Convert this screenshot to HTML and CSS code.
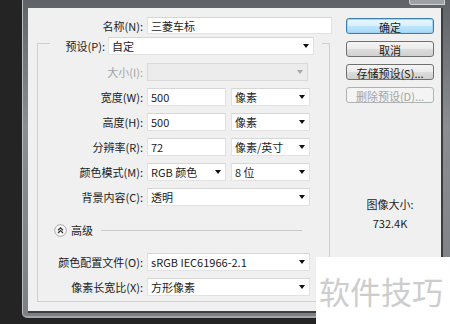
FILE: index.html
```html
<!DOCTYPE html>
<html lang="zh-CN">
<head>
  <meta charset="UTF-8">
  <title>新建</title>
  <link rel="stylesheet" href="styles.css">
</head>
<body>
  <!-- 新建文档对话框 -->
  <div class="window">
    <div class="titlebar"><span class="close-stub"></span></div>
    <div class="dialog">
      <div class="main">
        <div class="row name-row">
          <span class="lbl">名称(N):</span>
          <div class="field name">三菱车标</div>
        </div>

        <fieldset class="group">
          <legend class="group-head">
            <span class="lbl">预设(P):</span>
            <div class="field select preset"><span>自定</span><i class="arrow"></i></div>
          </legend>

          <div class="row off">
            <span class="lbl">大小(I):</span>
            <div class="field select full"><span></span><i class="arrow"></i></div>
          </div>
          <div class="row">
            <span class="lbl">宽度(W):</span>
            <div class="field half">500</div>
            <div class="field select half"><span>像素</span><i class="arrow"></i></div>
          </div>
          <div class="row">
            <span class="lbl">高度(H):</span>
            <div class="field half">500</div>
            <div class="field select half"><span>像素</span><i class="arrow"></i></div>
          </div>
          <div class="row">
            <span class="lbl">分辨率(R):</span>
            <div class="field half">72</div>
            <div class="field select half"><span>像素/英寸</span><i class="arrow"></i></div>
          </div>
          <div class="row">
            <span class="lbl">颜色模式(M):</span>
            <div class="field select half"><span>RGB 颜色</span><i class="arrow"></i></div>
            <div class="field select half"><span>8 位</span><i class="arrow"></i></div>
          </div>
          <div class="row">
            <span class="lbl">背景内容(C):</span>
            <div class="field select full"><span>透明</span><i class="arrow"></i></div>
          </div>

          <div class="advanced">
            <svg class="chev" width="13" height="13" viewBox="0 0 13 13">
              <circle cx="6.5" cy="6.5" r="5.8" fill="#f7f7f7" stroke="#a8a8a8"/>
              <path d="M4 6.2 6.5 3.8 9 6.2M4 9 6.5 6.6 9 9" fill="none" stroke="#333" stroke-width="1.2"/>
            </svg>
            <span>高级</span>
            <i class="rule"></i>
          </div>

          <div class="row">
            <span class="lbl">颜色配置文件(O):</span>
            <div class="field select full"><span>sRGB IEC61966-2.1</span><i class="arrow"></i></div>
          </div>
          <div class="row">
            <span class="lbl">像素长宽比(X):</span>
            <div class="field select full"><span>方形像素</span><i class="arrow"></i></div>
          </div>
        </fieldset>
      </div>

      <div class="side">
        <button class="btn primary">确定</button>
        <button class="btn">取消</button>
        <button class="btn">存储预设(S)...</button>
        <button class="btn" disabled>删除预设(D)...</button>
        <div class="size-info">
          <p>图像大小:</p>
          <p>732.4K</p>
        </div>
      </div>
    </div>
  </div>

  <div class="watermark">软件技巧</div>
</body>
</html>
```

FILE: styles.css
```css
* {box-sizing:border-box;margin:0;padding:0;}
body {background:#242424;font-family:"Noto Sans CJK SC","Microsoft YaHei",sans-serif;font-size:11px;color:#1c1c1c;width:450px;height:324px;overflow:hidden;}

.window {margin-left:22px;width:428px;height:318px;padding:0 7px 3px 5px;background:linear-gradient(#5f6267,#8a8d92 40%,#7c7f84);border-left:1px solid #b9bcc0;border-bottom:2px solid #a3a6aa;border-radius:0 0 0 5px;}
.titlebar {height:8px;display:flex;justify-content:flex-end;}
.close-stub {width:36px;height:5px;margin-right:-2px;border:1px solid #d0d0d0;border-top:none;border-radius:0 0 0 3px;background:#9da0a4;}

.dialog {height:305px;background:#f0f0f0;border-right:2px solid #3a3c40;border-bottom:2px solid #3a3c40;display:flex;}

.main {width:304px;}
.row {display:flex;align-items:center;gap:5px;height:18px;margin-top:7px;}
.row .lbl {width:105px;margin-right:-1px;text-align:right;white-space:nowrap;}
.name-row {margin-top:9px;height:17px;}
.name-row .lbl {width:115px;}

.field {height:100%;background:#fff;border:1px solid #e2e2e2;border-top-color:#d6d6d6;display:flex;align-items:center;padding-left:3px;white-space:nowrap;}
.field.name {width:185px;}
.field.half {width:79px;}
.field.full {width:163px;}
.select span {flex:1;}
.arrow {width:0;height:0;margin-right:4px;border-left:3px solid transparent;border-right:3px solid transparent;border-top:4px solid #111;}

.group {margin:-3px 0 0 9px;width:293px;border:1px solid #cfcfcf;padding:0 0 5px;}
.group-head {margin-left:12px;padding:6px 8px 0 12px;display:flex;align-items:center;height:24px;}
.group-head .lbl {width:43px;text-align:right;white-space:nowrap;margin-right:3px;}
.field.preset {width:206px;height:18px;}
.group-head + .row {margin-top:8px;}

.off .lbl {color:#a3a3a3;}
.off .field {background:#ececec;border-color:#d9d9d9;width:161px;}
.off .arrow {border-top-color:#a8a8a8;}

.advanced {display:flex;align-items:center;height:14px;margin:17px 27px 16px 16px;}
.advanced .chev {margin-right:4px;}
.advanced .rule {flex:1;height:1px;background:#c9c9c9;margin-left:8px;}
.advanced + .row {margin-top:0;}

.side {width:88px;margin-left:14px;padding-top:10px;display:flex;flex-direction:column;gap:7px;}
.btn {height:16px;font:inherit;color:#1c1c1c;border:1px solid #707070;border-radius:3px;background:linear-gradient(#f4f4f4,#ebebeb 50%,#dddddd 51%,#d0d0d0);}
.btn.primary {border-color:#3c7fb1;box-shadow:0 0 0 1px #9fd3f2 inset;background:linear-gradient(#eaf6fd,#d9f0fc 50%,#bee6fd 51%,#a7d9f5);}
.btn:disabled {color:#a3a3a3;border-color:#adb2b5;background:#f4f4f4;}
.size-info {margin-top:85px;text-align:center;line-height:19px;}

.watermark {position:absolute;left:316px;top:257px;right:0;bottom:0;background:#fff;color:#cdcdcd;font-size:31px;line-height:31px;padding:18px 0 0 3px;white-space:nowrap;}
```
